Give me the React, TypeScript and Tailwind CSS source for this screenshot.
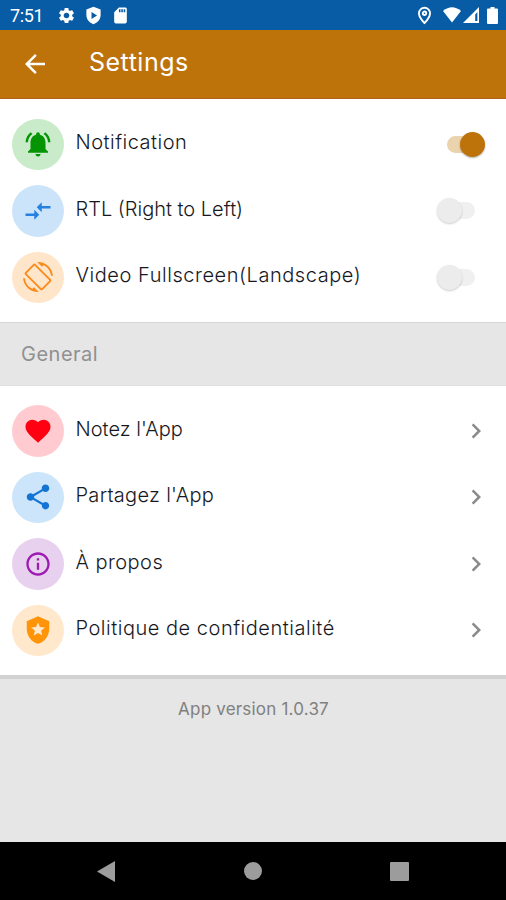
import type { ReactNode } from 'react'
import {
  MdArrowBack,
  MdChevronRight,
  MdCompareArrows,
  MdFavorite,
  MdInfoOutline,
  MdLocalPolice,
  MdNotificationsActive,
  MdOutlineScreenRotation,
  MdSdCard,
  MdSettings,
  MdShare,
} from 'react-icons/md'

type RowProps = {
  icon: ReactNode
  circle: string
  label: string
  tracking: string
  children: ReactNode
}

const Row = ({ icon, circle, label, tracking, children }: RowProps) => (
  <div className="flex h-[66.5px] items-center pl-3">
    <div className={`flex size-[51.5px] shrink-0 items-center justify-center rounded-full ${circle}`}>{icon}</div>
    <span className={`relative -top-[2px] ml-[12px] flex-1 whitespace-nowrap text-[20px] leading-7 font-light text-[#17191f] ${tracking}`}>
      {label}
    </span>
    {children}
  </div>
)

const Toggle = ({ on = false }: { on?: boolean }) =>
  on ? (
    <div className="mr-[21px] flex h-[17px] w-[38px] items-center justify-end rounded-full bg-[#ebd3ad]">
      <div className="size-[25px] rounded-full bg-[#bd730a] shadow-[0_1px_2px_rgba(0,0,0,0.3)]" />
    </div>
  ) : (
    <div className="mr-[31px] flex h-[17px] w-[38px] items-center rounded-full bg-[#f0f0f0]">
      <div className="size-[25px] shrink-0 rounded-full bg-[#ececec] shadow-[0_1px_2px_rgba(0,0,0,0.2)]" />
    </div>
  )

const Chevron = () => <MdChevronRight className="mr-[15px] size-[30px] text-[#8a8a8a]" />

export default function App() {
  return (
    <main className="flex h-[900px] w-[506px] flex-col overflow-hidden bg-[#e6e6e6] font-['Inter',sans-serif]">
      {/* Status bar */}
      <div className="flex h-[30px] shrink-0 items-center bg-[#075ca5] pl-[10px] pr-2 text-white">
        <span className="w-[47px] pt-px font-['Roboto',sans-serif] text-[18px] leading-[29px] tracking-[-0.4px]">7:51</span>
        <MdSettings className="size-[19px]" />
        <svg className="ml-[8px] size-[19px]" viewBox="0 0 24 24" fill="currentColor">
          <path fillRule="evenodd" d="M12 1 3 4.500v7C3 17 6.800 21.500 12 23c5.200-1.500 9-6 9-11.500v-7L12 1Zm-2.500 6.500 7 4.500-7 4.500v-9Z" />
        </svg>
        <MdSdCard className="ml-[8px] size-[19px]" />
        <div className="ml-auto flex items-center">
          <svg className="size-[19px]" viewBox="0 0 24 24" fill="none" stroke="currentColor" strokeWidth="2.4">
            <path d="M12 21.500S5 14.500 5 9.200a7 7 0 0 1 14 0C19 14.500 12 21.500 12 21.500Z" />
            <circle cx="12" cy="9.200" r="2.200" />
          </svg>
          <svg className="ml-[9px] h-4 w-[18px]" viewBox="0 0 18 16" fill="currentColor">
            <path d="M0 4Q9-3.500 18 4L9 15.500Z" />
          </svg>
          <svg className="ml-[2px] size-4" viewBox="0 0 16 16" fill="currentColor">
            <path fillRule="evenodd" d="M16 0v16H0L16 0Zm-1.600 5L12.200 7.500v6.500h2.200V5Z" />
          </svg>
          <svg className="ml-2 h-[17px] w-[11px]" viewBox="0 0 11 17" fill="currentColor">
            <path d="M3.500 0h4v1.500H10a1 1 0 0 1 1 1V16a1 1 0 0 1-1 1H1a1 1 0 0 1-1-1V2.500a1 1 0 0 1 1-1h2.500V0Z" />
          </svg>
        </div>
      </div>

      {/* App bar */}
      <header className="flex h-[69px] shrink-0 items-center border-b border-[#b2621a] bg-[#bd730a] pl-5 text-white">
        <MdArrowBack className="size-[30px]" />
        <h1 className="relative -top-px ml-[39px] text-[25px] tracking-[0.5px]">Settings</h1>
      </header>

      <section className="h-[223px] shrink-0 bg-white pt-3">
        <Row
          icon={<MdNotificationsActive className="size-[30px] text-[#049404]" />}
          circle="bg-[#c9ebc9]"
          label="Notification"
          tracking="tracking-[0.5px]"
        >
          <Toggle on />
        </Row>
        <Row
          icon={<MdCompareArrows className="size-[30px] text-[#2580e0]" />}
          circle="bg-[#cce4fa]"
          label="RTL (Right to Left)"
          tracking="tracking-[0px]"
        >
          <Toggle />
        </Row>
        <Row
          icon={<MdOutlineScreenRotation className="size-[30px] text-[#f98b1c]" />}
          circle="bg-[#ffe6cb]"
          label="Video Fullscreen(Landscape)"
          tracking="tracking-[0.55px]"
        >
          <Toggle />
        </Row>
      </section>

      <div className="flex h-16 shrink-0 items-center border-y border-t-[#d6d6d6] border-b-[#dedede] pl-[21px] text-[20px] text-[#909090]">
        <h2 className="tracking-[0.5px]">General</h2>
      </div>

      <section className="h-[293px] shrink-0 border-b-4 border-[#d2d2d2] bg-white pt-[11.5px]">
        <Row
          icon={<MdFavorite className="size-[30px] text-[#ff0012]" />}
          circle="bg-[#ffcbd0]"
          label="Notez l'App"
          tracking="tracking-[0.02px]"
        >
          <Chevron />
        </Row>
        <Row
          icon={<MdShare className="size-[30px] text-[#1474d4]" />}
          circle="bg-[#cce5fb]"
          label="Partagez l'App"
          tracking="tracking-[0.3px]"
        >
          <Chevron />
        </Row>
        <Row
          icon={<MdInfoOutline className="size-[28px] text-[#9c1bb0]" />}
          circle="bg-[#e8d0ef]"
          label="À propos"
          tracking="tracking-[0.45px]"
        >
          <Chevron />
        </Row>
        <Row
          icon={<MdLocalPolice className="size-[30px] text-[#ff9408]" />}
          circle="bg-[#ffe8cb]"
          label="Politique de confidentialité"
          tracking="tracking-[0.52px]"
        >
          <Chevron />
        </Row>
      </section>

      <p className="mt-[18px] pl-px text-center text-[17px] leading-6 tracking-[0.2px] text-[#808080]">App version 1.0.37</p>

      {/* Android navigation */}
      <nav className="mt-auto flex h-[58px] shrink-0 items-center justify-between bg-black pl-[97px] pr-[97px] text-[#9c9c9c]">
        <svg className="h-[21px] w-[18px]" viewBox="0 0 18 21" fill="currentColor">
          <path d="M18 0v21L0 10.500Z" />
        </svg>
        <div className="size-[18px] rounded-full bg-current" />
        <div className="size-[19px] rounded-[1px] bg-current" />
      </nav>
    </main>
  )
}
